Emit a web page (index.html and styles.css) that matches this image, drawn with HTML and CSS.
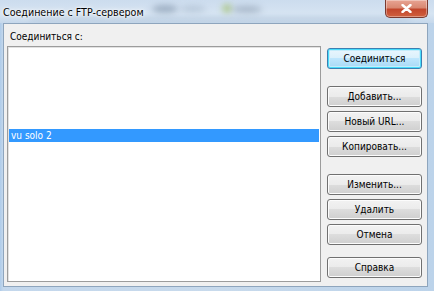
FILE: index.html
```html
<!DOCTYPE html>
<html lang="ru">
<head>
<meta charset="utf-8">
<title>Соединение с FTP-сервером</title>
<link rel="stylesheet" href="styles.css">
</head>
<body>
<div class="window">
  <div class="titlebar">
    <span class="blob blob-a"></span>
    <span class="blob blob-b"></span>
    <span class="blob blob-c"></span>
    <span class="blob blob-d"></span>
    <span class="blob blob-e"></span>
    <span class="title">Соединение с FTP-сервером</span>
    <button class="close" aria-label="Закрыть">
      <svg width="11" height="9" viewBox="0 0 11 9"><path d="M1.5 1 L9.5 8 M9.5 1 L1.5 8" stroke="#fff" stroke-width="2.4" stroke-linecap="round"/></svg>
    </button>
  </div>
  <div class="client">
    <div class="left">
      <div class="label">Соединиться с:</div>
      <div class="listbox">
        <div class="item selected">vu solo 2</div>
      </div>
    </div>
    <div class="buttons">
      <button class="btn default">Соединиться</button>
      <div class="group">
        <button class="btn">Добавить...</button>
        <button class="btn">Новый URL...</button>
        <button class="btn">Копировать...</button>
      </div>
      <div class="group">
        <button class="btn">Изменить...</button>
        <button class="btn">Удалить</button>
        <button class="btn">Отмена</button>
      </div>
      <button class="btn help">Справка</button>
    </div>
  </div>
</div>
</body>
</html>
```
FILE: styles.css
```css
* { box-sizing: border-box; }
html, body {
  margin: 0;
  padding: 0;
  width: 434px;
  height: 291px;
  overflow: hidden;
}
body {
  background: #b7cfe8;
  font-family: "DejaVu Sans Condensed", "Liberation Sans", Arial, sans-serif;
  font-size: 10px;
  color: #000;
}
.window {
  width: 434px;
  height: 291px;
  display: flex;
  flex-direction: column;
  background: linear-gradient(90deg, #aecbe9 0, #c3d7ec 3px, #c8daec 50%, #bcd3ea 100%);
}
.titlebar {
  position: relative;
  height: 23px;
  display: flex;
  align-items: flex-start;
  justify-content: space-between;
  overflow: hidden;
  background: linear-gradient(180deg, #ccdcee 0, #d6e4f2 60%, #c6d8eb 100%);
}
.blob {
  position: absolute;
  border-radius: 50%;
  filter: blur(3px);
}
.blob-a { left: 152px; top: 5px; width: 26px; height: 8px; background: #6a7e96; opacity: .5; }
.blob-b { left: 180px; top: 6px; width: 26px; height: 6px; background: #9eb0c4; opacity: .55; }
.blob-c { left: 222px; top: 4px; width: 10px; height: 9px; background: #a8c47a; opacity: .8; }
.blob-d { left: 232px; top: 6px; width: 30px; height: 7px; background: #7d8ea2; opacity: .5; }
.blob-e { left: 30px; top: 18px; width: 380px; height: 3px; background: #9fb3c8; opacity: .45; border-radius: 2px; }
.title {
  position: relative;
  margin: 4px 0 0 3px;
  font-family: "DejaVu Sans Condensed", "Liberation Sans", Arial, sans-serif;
  font-size: 10.6px;
  line-height: 16px;
  color: #000;
  text-shadow: 0 0 6px #fff, 0 0 3px #fff, 0 0 1px #fff;
}
.close {
  position: relative;
  margin: 0 6px 0 0;
  width: 43px;
  height: 18px;
  padding: 0;
  border: 1px solid #7a3a30;
  border-top: none;
  border-radius: 0 0 5px 5px;
  background: linear-gradient(180deg, #e8a493 0, #d98872 45%, #c2462c 55%, #d0603e 100%);
  box-shadow: inset 0 0 0 1px rgba(255,255,255,.35);
  display: flex;
  align-items: center;
  justify-content: center;
}
.client {
  flex: 1;
  margin: 0 6px 4px 3px;
  background: #f0f0f0;
  border: 1px solid #8ea5bd;
  display: flex;
  gap: 6px;
  padding: 0 5px 0 3px;
}
.left {
  display: flex;
  flex-direction: column;
}
.label {
  margin-top: 6px;
  height: 14px;
  line-height: 14px;
  padding-left: 3px;
  margin-bottom: 2px;
}
.listbox {
  width: 314px;
  height: 236px;
  background: #fff;
  border: 1px solid #9c9c9c;
  box-shadow: inset 1px 1px 0 #e2e2e2;
  padding: 82px 1px 0 1px;
}
.item {
  height: 13px;
  line-height: 13px;
  padding-left: 2px;
}
.item.selected {
  background: #3399ff;
  color: #fff;
}
.buttons {
  display: flex;
  flex-direction: column;
  padding-top: 24px;
  gap: 17px;
}
.group {
  display: flex;
  flex-direction: column;
  gap: 4px;
}
.btn {
  width: 95px;
  height: 21px;
  padding: 0;
  font-family: "DejaVu Sans Condensed", "Liberation Sans", Arial, sans-serif;
  font-size: 10px;
  color: #000;
  border: 1px solid #707070;
  border-radius: 3px;
  background: linear-gradient(180deg, #f2f2f2 0, #ebebeb 50%, #dddddd 50%, #cfcfcf 100%);
  box-shadow: inset 0 0 0 1px #fcfcfc;
}
.btn.default {
  border-color: #3c7fb1;
  background: linear-gradient(180deg, #eaf6fd 0, #d9f0fc 50%, #bee6fd 50%, #a7d9f5 100%);
  box-shadow: inset 0 0 0 1px #48dcfb, inset 0 0 0 2px #c4ecfb;
}
.btn.help {
  margin-top: -5px;
}
```
